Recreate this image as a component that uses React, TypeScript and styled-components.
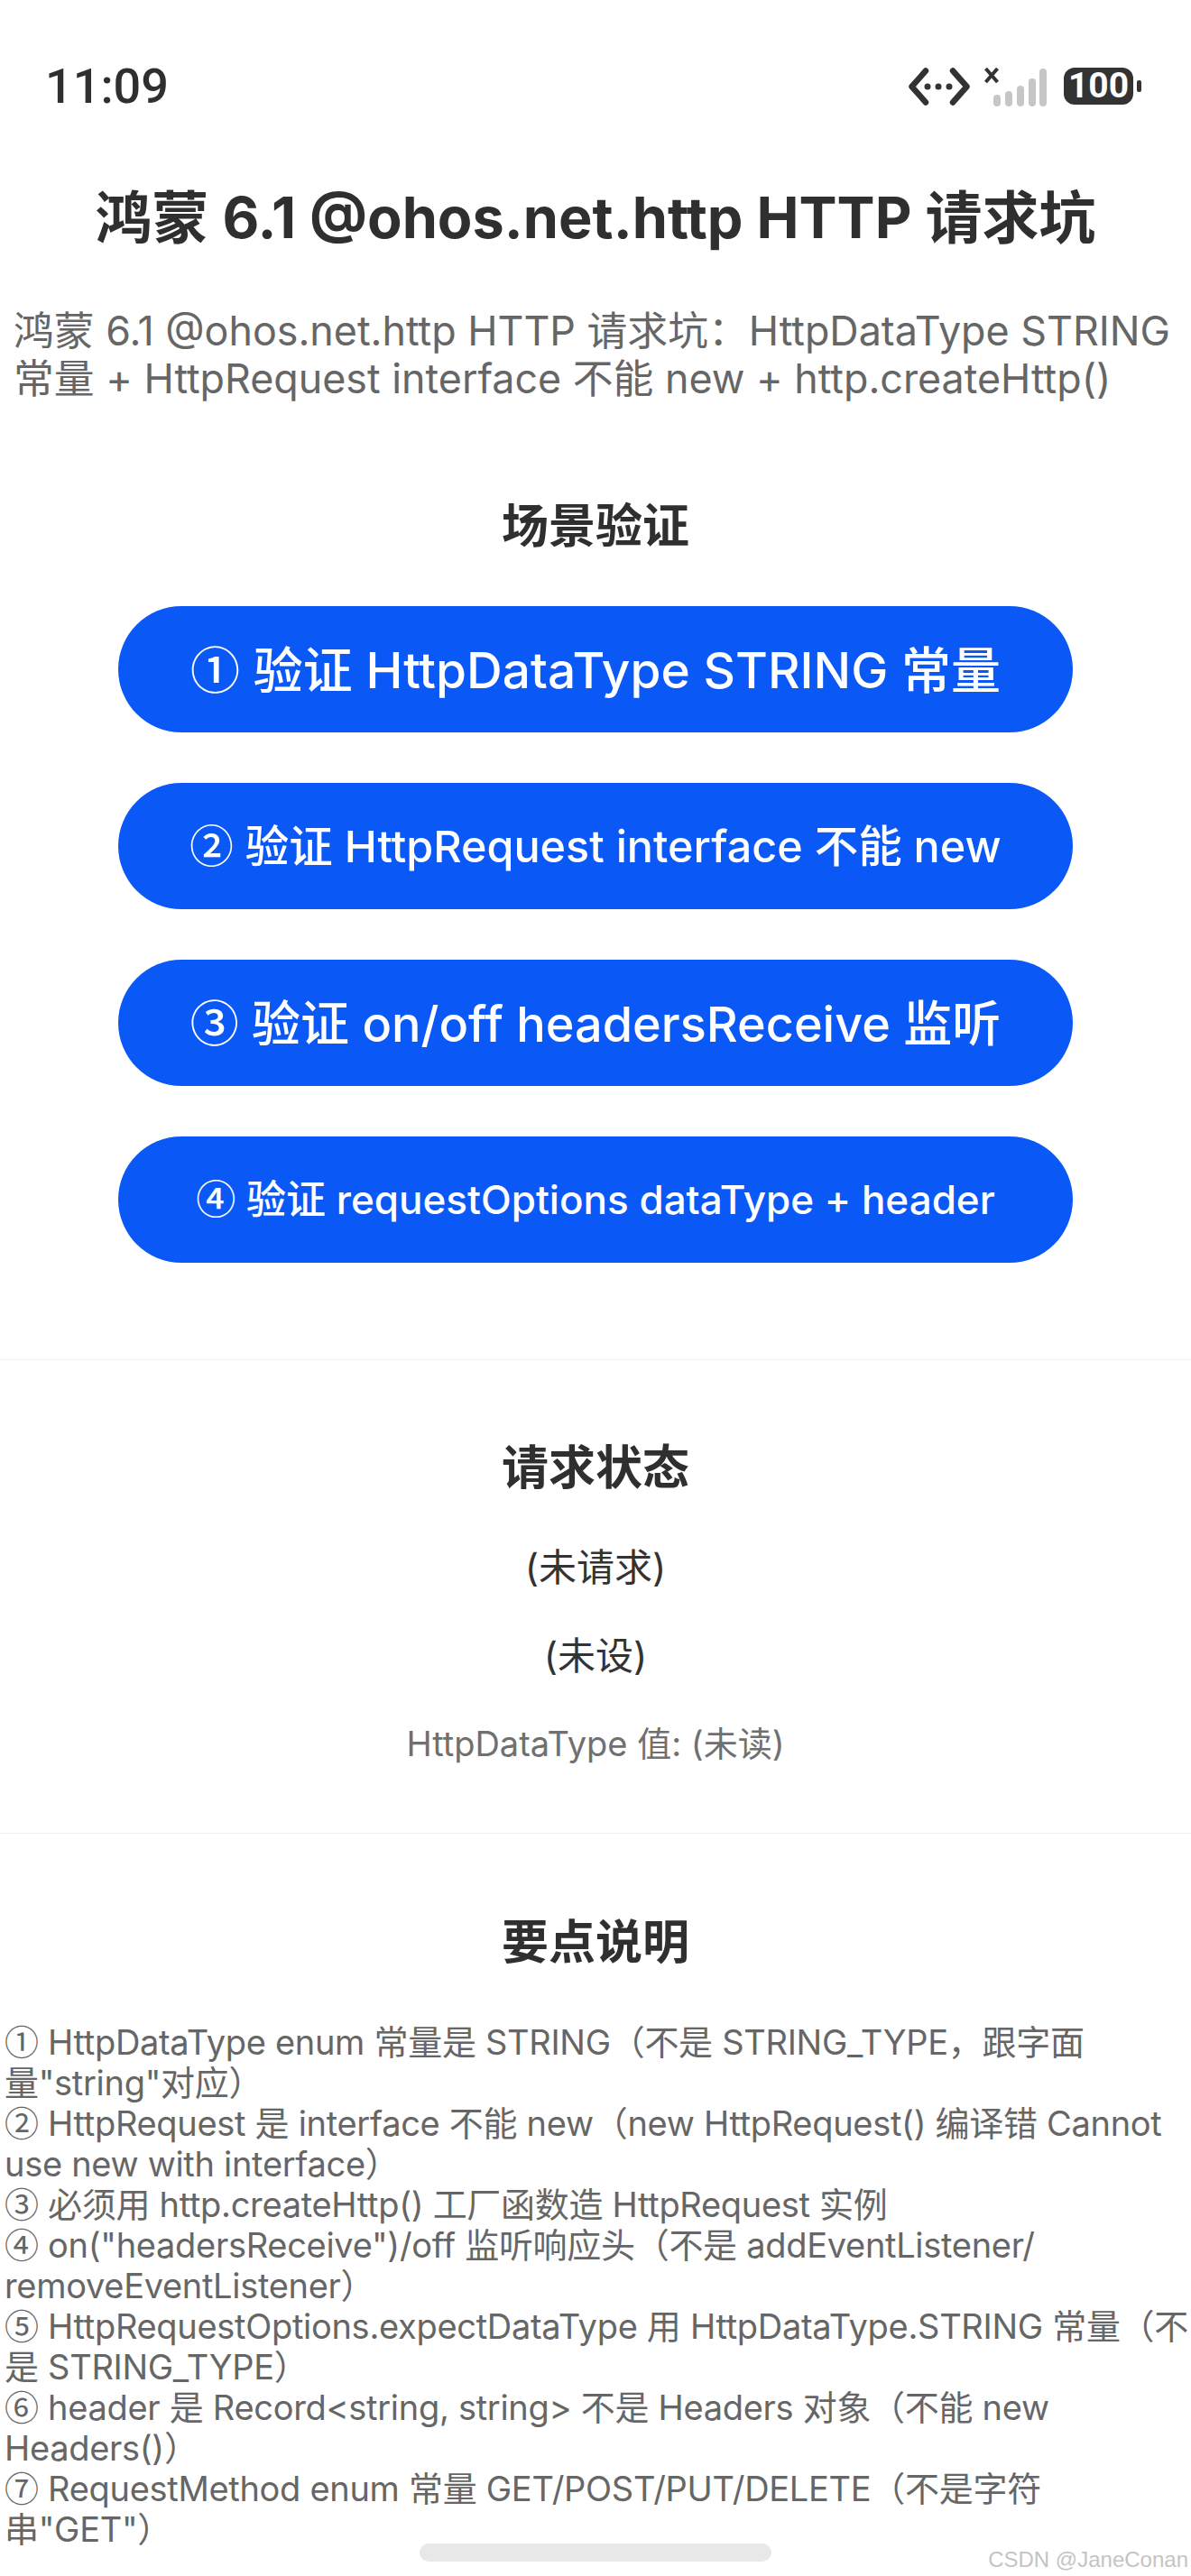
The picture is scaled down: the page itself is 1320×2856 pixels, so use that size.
import React from 'react';
import styled, { createGlobalStyle } from 'styled-components';

const FONT = `Inter, "Noto Sans CJK SC", sans-serif`;
const STATUS_FONT = `Roboto, sans-serif`;

const Global = createGlobalStyle`
  html, body { margin: 0; padding: 0; background: #fff; }
  body { font-family: ${FONT}; }
`;

const Page = styled.div`
  width: 1320px;
  height: 2856px;
  position: relative;
  overflow: hidden;
  background: #fff;
  color: #2f2f2f;
`;

const StatusBar = styled.div`
  height: 201px;
  padding: 0 64px 10px 50px;
  box-sizing: border-box;
  display: flex;
  align-items: center;
  justify-content: space-between;
`;

const Clock = styled.div`
  font-family: ${STATUS_FONT};
  font-size: 54px;
  font-weight: 500;
`;

const Indicators = styled.div`
  display: flex;
  align-items: center;
`;

const Title = styled.h1`
  margin: 0;
  text-align: center;
  font-size: 63px;
  line-height: 80px;
  font-weight: 700;
  white-space: pre;
`;

const Lead = styled.p`
  margin: 60px 0 0;
  padding: 0 15px;
  font-size: 44.8px;
  line-height: 53px;
  color: #666;
  white-space: pre;
`;

const Section = styled.section<{ $divided?: boolean; $top: number; $bottom: number }>`
  display: flex;
  flex-direction: column;
  align-items: center;
  border-top: ${(p) => (p.$divided ? '1px solid #efefef' : 'none')};
  margin-top: ${(p) => (p.$divided ? 0 : p.$top)}px;
  padding-top: ${(p) => (p.$divided ? p.$top : 0)}px;
  padding-bottom: ${(p) => p.$bottom}px;
`;

const Heading = styled.h2`
  margin: 0;
  font-size: 52px;
  line-height: 70px;
  font-weight: 700;
`;

const ButtonList = styled.div`
  display: flex;
  flex-direction: column;
  gap: 56px;
  margin-top: 53px;
`;

const ActionButton = styled.button<{ $size: number }>`
  width: 1058px;
  height: 140px;
  border: 0;
  border-radius: 70px;
  background: #0a59f7;
  color: #fff;
  font-family: ${FONT};
  font-size: ${(p) => p.$size}px;
  font-weight: 500;
  padding: 0 0 6px;
  white-space: pre;
`;

// Inter has its own oversized circled digits, the reference uses the CJK ones
const Circled = styled.span`
  display: inline-block;
  line-height: 1;
  font-family: "Noto Sans CJK SC", sans-serif;
`;

const StateList = styled.div`
  display: flex;
  flex-direction: column;
  align-items: center;
  gap: 41.5px;
  margin-top: 47px;
`;

const StateLine = styled.div<{ $muted?: boolean }>`
  font-size: ${(p) => (p.$muted ? 38 : 42)}px;
  line-height: 56px;
  color: ${(p) => (p.$muted ? '#707070' : '#333')};
`;

const Notes = styled.div`
  align-self: stretch;
  margin-top: 53px;
  padding: 0 5px;
  font-size: 38px;
  line-height: 45px;
  letter-spacing: -0.3px;
  color: #666;
  white-space: pre;
`;

const NoteLine = styled.div`
  height: 45px;
`;

const HomeBar = styled.div`
  position: absolute;
  left: 465px;
  top: 2820px;
  width: 390px;
  height: 20px;
  border-radius: 10px;
  background: #e8e8e8;
`;

const Watermark = styled.div`
  position: absolute;
  right: 3px;
  top: 2823px;
  font-family: "Liberation Sans", sans-serif;
  font-size: 24px;
  line-height: 30px;
  color: #c4c4c4;
`;

const SignalSvg = styled.svg`
  margin-left: 16px;
`;

const NetworkIcon = () => (
  <svg width="68" height="42" viewBox="0 0 68 42">
    <path d="M19 3.5 3.5 21 19 38.5M49 3.5 64.5 21 49 38.5" fill="none" stroke="#333" strokeWidth="6.5" strokeLinecap="round" strokeLinejoin="round" />
    <circle cx="21" cy="21" r="3.5" fill="#333" />
    <circle cx="33" cy="21" r="3.5" fill="#333" />
    <circle cx="45" cy="21" r="3.5" fill="#333" />
  </svg>
);

const SignalIcon = () => (
  <SignalSvg width="69" height="44" viewBox="0 0 69 44">
    <path d="M1.5 2l13 15M14.5 2l-13 15" stroke="#333" strokeWidth="4" fill="none" />
    <rect x="10" y="31" width="8" height="13" rx="4" fill="#c6c6c6" />
    <rect x="23" y="27" width="8" height="17" rx="4" fill="#c6c6c6" />
    <rect x="36" y="21" width="8" height="23" rx="4" fill="#c6c6c6" />
    <rect x="49" y="13" width="8" height="31" rx="4" fill="#c6c6c6" />
    <rect x="61" y="2" width="8" height="42" rx="4" fill="#c6c6c6" />
  </SignalSvg>
);

const Battery = styled.div`
  width: 77px;
  height: 41px;
  margin-left: 19px;
  border-radius: 12px;
  background: #333;
  color: #fff;
  font-family: ${STATUS_FONT};
  font-size: 39px;
  font-weight: 700;
  line-height: 41px;
  text-align: center;
  position: relative;
  &::after {
    content: '';
    position: absolute;
    right: -9px;
    top: 14px;
    width: 5px;
    height: 13px;
    border-radius: 2px;
    background: #333;
  }
`;

const buttons: [string, string, number][] = [
  ['①', ' 验证 HttpDataType STRING 常量', 55],
  ['②', ' 验证 HttpRequest interface 不能 new', 48.5],
  ['③', ' 验证 on/off headersReceive 监听', 54],
  ['④', ' 验证 requestOptions dataType + header', 44],
];

const notes: [string, string][] = [
  ['①', ' HttpDataType enum 常量是 STRING（不是 STRING_TYPE，跟字面'],
  ['', '量"string"对应）'],
  ['②', ' HttpRequest 是 interface 不能 new（new HttpRequest() 编译错 Cannot'],
  ['', 'use new with interface）'],
  ['③', ' 必须用 http.createHttp() 工厂函数造 HttpRequest 实例'],
  ['④', ' on("headersReceive")/off 监听响应头（不是 addEventListener/'],
  ['', 'removeEventListener）'],
  ['⑤', ' HttpRequestOptions.expectDataType 用 HttpDataType.STRING 常量（不'],
  ['', '是 STRING_TYPE）'],
  ['⑥', ' header 是 Record<string, string> 不是 Headers 对象（不能 new'],
  ['', 'Headers()）'],
  ['⑦', ' RequestMethod enum 常量 GET/POST/PUT/DELETE（不是字符'],
  ['', '串"GET"）'],
];

export default function App() {
  return (
    <Page>
      <Global />
      <StatusBar>
        <Clock>11:09</Clock>
        <Indicators>
          <NetworkIcon />
          <SignalIcon />
          <Battery>100</Battery>
        </Indicators>
      </StatusBar>
      <Title>鸿蒙 6.1 @ohos.net.http HTTP 请求坑</Title>
      <Lead>{`鸿蒙 6.1 @ohos.net.http HTTP 请求坑：HttpDataType STRING
常量 + HttpRequest interface 不能 new + http.createHttp()`}</Lead>
      <Section $top={102} $bottom={107}>
        <Heading>场景验证</Heading>
        <ButtonList>
          {buttons.map(([mark, label, size]) => (
            <ActionButton key={mark} $size={size}>
              <Circled>{mark}</Circled>
              {label}
            </ActionButton>
          ))}
        </ButtonList>
      </Section>
      <Section $divided $top={85} $bottom={71}>
        <Heading>请求状态</Heading>
        <StateList>
          <StateLine>(未请求)</StateLine>
          <StateLine>(未设)</StateLine>
          <StateLine $muted>HttpDataType 值: (未读)</StateLine>
        </StateList>
      </Section>
      <Section $divided $top={86} $bottom={0}>
        <Heading>要点说明</Heading>
        <Notes>
          {notes.map(([mark, text]) => (
            <NoteLine key={text}>
              {mark && <Circled>{mark}</Circled>}
              {text}
            </NoteLine>
          ))}
        </Notes>
      </Section>
      <HomeBar />
      <Watermark>CSDN @JaneConan</Watermark>
    </Page>
  );
}
